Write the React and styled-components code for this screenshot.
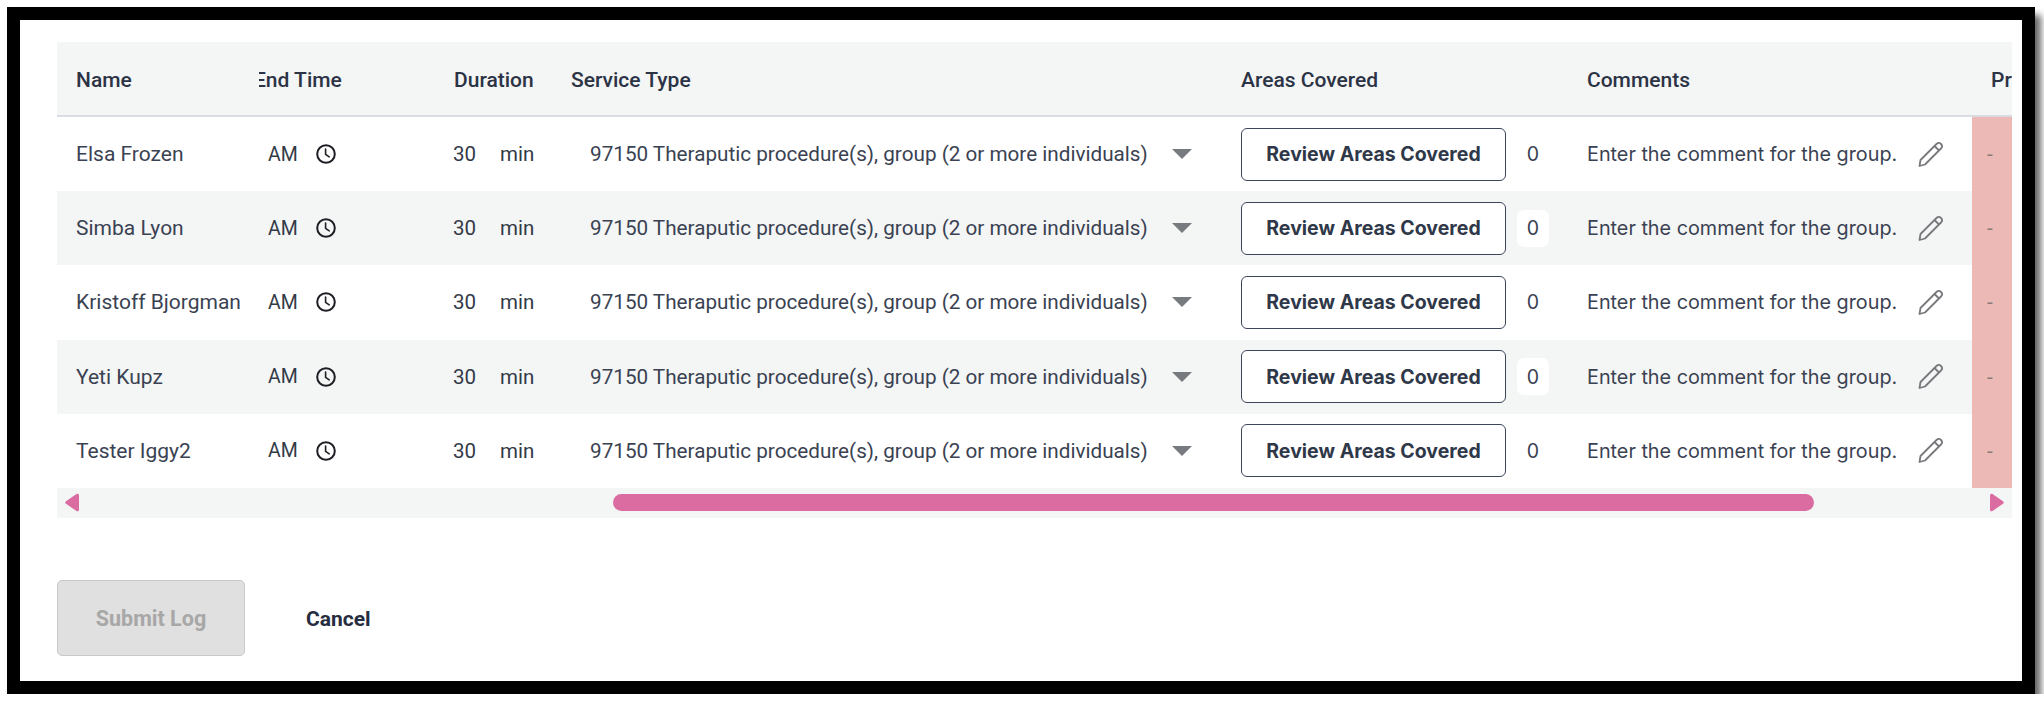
import React from "react";
import styled, { createGlobalStyle } from "styled-components";

const Global = createGlobalStyle`
  html, body { margin: 0; padding: 0; background: #fff; overflow: hidden; }
  body { font-family: Roboto, "Liberation Sans", sans-serif; color: #2b3345; }
`;
const COLS = "202px 190px 122px 670px 346px 385px 40px";

const Frame = styled.div`
  box-sizing: border-box;
  margin: 7px 0 0 7px;
  width: 2028px;
  height: 687px;
  border: 13px solid #000;
  background: #fff;
  box-shadow: 6px 8px 7px rgba(0,0,0,.6);
  padding: 22px 10px 0 37px;
`;
const Table = styled.div`
  width: 1955px;
`;
const HeaderRow = styled.div`
  box-sizing: border-box;
  display: grid;
  grid-template-columns: ${COLS};
  height: 75px;
  padding-top: 2px;
  background: #f4f5f5;
  border-bottom: 2px solid #d9dce0;
  align-items: center;
  font-size: 21px;
  font-weight: 500;
  color: #2b3345;
`;
const HeadCell = styled.div`
  overflow: hidden;
  white-space: nowrap;
  padding-left: ${p => p.$pad || 0}px;
`;
const ClippedLabel = styled.span`
  display: block;
  margin-left: -5px;
`;
const Row = styled.div`
  display: grid;
  grid-template-columns: ${COLS};
  height: 74.2px;
  background: ${p => (p.$alt ? "#f4f5f5" : "#fff")};
  align-items: center;
  font-size: 20.7px;
  color: #3a4252;
`;
const NameCell = styled.div`
  padding-left: 19px;
  white-space: nowrap;
  font-size: 21px;
`;
const TimeCell = styled.div`
  display: flex;
  align-items: center;
  padding-left: 9px;
  font-size: 19.5px;
  color: #333a47;
  svg { margin-left: 17px; color: #1d1f24; }
`;
const DurationCell = styled.div`
  display: flex;
  align-items: center;
  padding-left: 4px;
  gap: 24px;
  font-size: 20.5px;
  color: #333a47;
`;
const ServiceCell = styled.div`
  display: flex;
  align-items: center;
  padding-left: 19px;
  white-space: nowrap;
`;
const Caret = styled.span`
  margin-left: 24px;
  width: 0;
  height: 0;
  border-left: 10px solid transparent;
  border-right: 10px solid transparent;
  border-top: 10px solid #777b80;
`;
const AreasCell = styled.div`
  display: flex;
  align-items: center;
`;
const ReviewButton = styled.button`
  box-sizing: border-box;
  width: 265px;
  height: 53px;
  background: #fff;
  border: 1.5px solid #3c465a;
  border-radius: 6px;
  font-family: Inter, Roboto, sans-serif;
  font-size: 19.5px;
  font-weight: 700;
  color: #2f3849;
  padding: 0;
`;
const Count = styled.span`
  box-sizing: border-box;
  margin-left: 11px;
  width: 32px;
  height: 37px;
  border-radius: 7px;
  display: flex;
  align-items: center;
  justify-content: center;
  background: ${p => (p.$alt ? "#fff" : "transparent")};
  font-family: Inter, Roboto, sans-serif;
  font-size: 19.5px;
`;
const CommentCell = styled.div`
  display: flex;
  align-items: center;
  white-space: nowrap;
  font-family: Inter, Roboto, sans-serif;
  font-size: 19.8px;
  svg { margin-left: 20px; }
`;
const FlagCell = styled.div`
  align-self: stretch;
  background: #edb9b6;
  display: flex;
  align-items: center;
  padding-left: 15px;
  color: #8a7a7a;
`;
const ScrollBar = styled.div`
  display: flex;
  align-items: center;
  height: 30px;
  background: #f4f5f5;
`;
const ArrowBox = styled.svg`
  flex: none;
  margin: ${p => p.$margin};
`;
const Thumb = styled.div`
  height: 17px;
  width: 1201px;
  margin-left: 534px;
  border-radius: 9px;
  background: #da6ca2;
`;
const Actions = styled.div`
  display: flex;
  align-items: center;
  margin-top: 62px;
`;
const SubmitButton = styled.button`
  box-sizing: border-box;
  width: 188px;
  height: 76px;
  border: 1.5px solid #c9c9c9;
  border-radius: 5px;
  background: #e0e0e0;
  color: #a7a7a7;
  font-family: Roboto, sans-serif;
  font-size: 21.5px;
  font-weight: 700;
  padding: 2px 0 0;
`;
const CancelButton = styled.button`
  margin-left: 61px;
  border: 0;
  padding: 2px 0 0;
  background: none;
  color: #252d3f;
  font-family: Roboto, sans-serif;
  font-size: 21px;
  font-weight: 700;
`;

const Clock = () => (
  <svg width="22" height="22" viewBox="0 0 22 22" fill="none" stroke="currentColor" strokeWidth="2" strokeLinecap="round">
    <circle cx="11" cy="11" r="8.8" />
    <path d="M10.6 6V11.4L14.2 13.8" strokeWidth="1.6" />
  </svg>
);
const PencilIcon = () => (
  <svg width="27" height="27" viewBox="0 0 27 27" fill="none" stroke="#77797c" strokeWidth="1.8" strokeLinejoin="round">
    <path d="M2.5 25L3.5 19L19.5 3A2.9 2.9 0 0 1 24 7.5L8 23.5Z" />
    <path d="M17.5 5L22 9.5" />
  </svg>
);

const names = ["Elsa Frozen", "Simba Lyon", "Kristoff Bjorgman", "Yeti Kupz", "Tester Iggy2"];

export default function App() {
  return (
    <>
      <Global />
      <Frame>
        <Table>
          <HeaderRow>
            <HeadCell $pad={19}>Name</HeadCell>
            <HeadCell><ClippedLabel>End Time</ClippedLabel></HeadCell>
            <HeadCell $pad={5}>Duration</HeadCell>
            <HeadCell>Service Type</HeadCell>
            <HeadCell>Areas Covered</HeadCell>
            <HeadCell>Comments</HeadCell>
            <HeadCell $pad={19}>Pr</HeadCell>
          </HeaderRow>
          {names.map((n, i) => (
            <Row key={n} $alt={i % 2 === 1}>
              <NameCell>{n}</NameCell>
              <TimeCell>AM<Clock /></TimeCell>
              <DurationCell><span>30</span><span>min</span></DurationCell>
              <ServiceCell>
                97150 Theraputic procedure(s), group (2 or more individuals)
                <Caret />
              </ServiceCell>
              <AreasCell>
                <ReviewButton>Review Areas Covered</ReviewButton>
                <Count $alt={i % 2 === 1}>0</Count>
              </AreasCell>
              <CommentCell>Enter the comment for the group.<PencilIcon /></CommentCell>
              <FlagCell>-</FlagCell>
            </Row>
          ))}
          <ScrollBar>
            <ArrowBox $margin="0 0 0 8px" width="14" height="19" viewBox="0 0 14 19">
              <path d="M11.5 1C13 0.2 14 1 14 2.5V16.5C14 18 13 18.8 11.5 18L1 10.8C0 10 0 9 1 8.2Z" fill="#da6ca2" />
            </ArrowBox>
            <Thumb />
            <ArrowBox $margin="0 0 0 176px" width="14" height="19" viewBox="0 0 14 19">
              <path d="M2.5 1C1 0.2 0 1 0 2.5V16.5C0 18 1 18.8 2.5 18L13 10.8C14 10 14 9 13 8.2Z" fill="#da6ca2" />
            </ArrowBox>
          </ScrollBar>
        </Table>
        <Actions>
          <SubmitButton disabled>Submit Log</SubmitButton>
          <CancelButton>Cancel</CancelButton>
        </Actions>
      </Frame>
    </>
  );
}
